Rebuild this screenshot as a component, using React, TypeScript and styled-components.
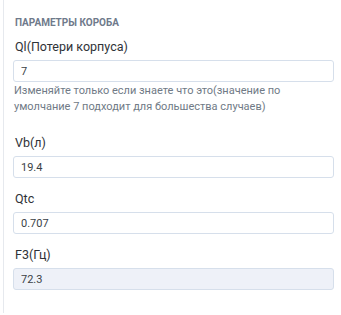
import React from "react";
import styled, { createGlobalStyle } from "styled-components";

const GlobalStyle = createGlobalStyle`
  body {
    margin: 0;
    background: #ffffff;
    font-family: "Roboto", "Liberation Sans", sans-serif;
  }
`;

const fields = [
  { label: "Vb(л)", value: "19.4" },
  { label: "Qtc", value: "0.707" },
  { label: "F3(Гц)", value: "72.3", readOnly: true },
];

const App = () => {
  return (
    <>
      <GlobalStyle />
      <Panel>
        <Title>ПАРАМЕТРЫ КОРОБА</Title>
        <Field $spaced>
          <Label>Ql(Потери корпуса)</Label>
          <Input defaultValue="7" />
          <Hint>
            Изменяйте только если знаете что это(значение по умолчание 7 подходит для большества случаев)
          </Hint>
        </Field>
        {fields.map((f) => (
          <Field key={f.label}>
            <Label>{f.label}</Label>
            <Input defaultValue={f.value} readOnly={f.readOnly} $muted={f.readOnly} />
          </Field>
        ))}
      </Panel>
    </>
  );
};

export default App;

const Panel = styled.div`
  margin-left: 3px;
  width: 331px;
  height: 313px;
  padding: 16px 0 0 9px;
  border-left: 1px solid #e6e9ee;
  box-sizing: border-box;
`;

const Title = styled.div`
  font-size: 10px;
  line-height: 14px;
  font-weight: 700;
  color: #6f7a8b;
  padding-left: 2px;
  margin-bottom: 8px;
`;

const Field = styled.div<{ $spaced?: boolean }>`
  display: flex;
  flex-direction: column;
  gap: 4px;
  margin-bottom: ${(p) => (p.$spaced ? "19px" : "12px")};
`;

const Label = styled.label`
  font-size: 12.5px;
  line-height: 18px;
  color: #2f3338;
  padding-left: 2px;
`;

const Input = styled.input<{ $muted?: boolean }>`
  width: 321px;
  height: 22px;
  box-sizing: border-box;
  border: 1px solid #d6dfeb;
  border-radius: 3px;
  padding: 0 7px;
  font-family: inherit;
  font-size: 11px;
  color: #3a3f46;
  background: ${(p) => (p.$muted ? "#eef1f8" : "#ffffff")};
  outline: none;
`;

const Hint = styled.div`
  margin-top: -3px;
  font-size: 11px;
  line-height: 16px;
  color: #707a86;
  padding-left: 1px;
  width: 300px;
`;
